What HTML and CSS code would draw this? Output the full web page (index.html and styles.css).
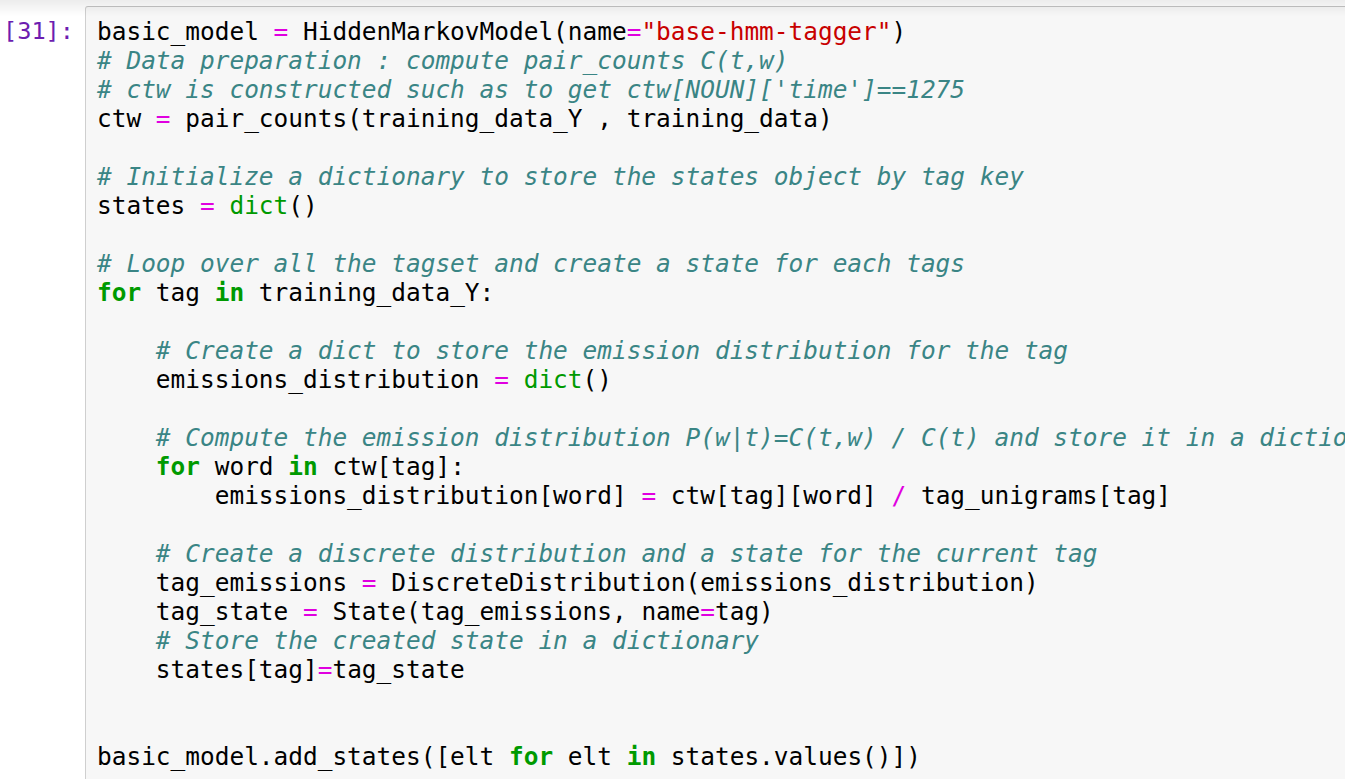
FILE: index.html
```html
<!DOCTYPE html>
<html>
<head>
<meta charset="utf-8">
<link rel="stylesheet" href="styles.css">
</head>
<body>
<div class="shade"></div>
<div class="cell">
  <div class="prompt">[31]:</div>
  <div class="editor">
<pre class="code">basic_model <span class="o">=</span> HiddenMarkovModel(name<span class="o">=</span><span class="s">"base-hmm-tagger"</span>)
<span class="c"># Data preparation : compute pair_counts C(t,w)</span>
<span class="c"># ctw is constructed such as to get ctw[NOUN]['time']==1275</span>
ctw <span class="o">=</span> pair_counts(training_data_Y , training_data)

<span class="c"># Initialize a dictionary to store the states object by tag key</span>
states <span class="o">=</span> <span class="b">dict</span>()

<span class="c"># Loop over all the tagset and create a state for each tags</span>
<span class="k">for</span> tag <span class="k">in</span> training_data_Y:

    <span class="c"># Create a dict to store the emission distribution for the tag</span>
    emissions_distribution <span class="o">=</span> <span class="b">dict</span>()

    <span class="c"># Compute the emission distribution P(w|t)=C(t,w) / C(t) and store it in a dictionary</span>
    <span class="k">for</span> word <span class="k">in</span> ctw[tag]:
        emissions_distribution[word] <span class="o">=</span> ctw[tag][word] <span class="o">/</span> tag_unigrams[tag]

    <span class="c"># Create a discrete distribution and a state for the current tag</span>
    tag_emissions <span class="o">=</span> DiscreteDistribution(emissions_distribution)
    tag_state <span class="o">=</span> State(tag_emissions, name<span class="o">=</span>tag)
    <span class="c"># Store the created state in a dictionary</span>
    states[tag]<span class="o">=</span>tag_state


basic_model.add_states([elt <span class="k">for</span> elt <span class="k">in</span> states.values()])
</pre>
  </div>
</div>
</body>
</html>
```

FILE: styles.css
```css
html, body {
  margin: 0;
  padding: 0;
  background: #ffffff;
  overflow: hidden;
  height: 779px;
}

.shade {
  position: fixed;
  top: 0;
  left: 0;
  right: 0;
  height: 16px;
  background: linear-gradient(to bottom, rgba(0,0,0,0.075), rgba(0,0,0,0));
  pointer-events: none;
  z-index: 2;
}

.cell {
  display: flex;
  align-items: flex-start;
  padding-top: 6px;
}

.prompt {
  flex: none;
  width: 74px;
  padding-right: 11px;
  text-align: right;
  font-family: "DejaVu Sans Mono", monospace;
  font-size: 23.6px;
  line-height: 29px;
  padding-top: 11px;
  color: #6d1db0;
}

.editor {
  flex: none;
  width: 1400px;
  height: 900px;
  background: #f7f7f7;
  border: 1px solid #cfcfcf;
  border-top-color: #c4c4c4;
  border-radius: 3px;
  box-sizing: border-box;
  padding: 10px 0 0 11px;
}

.code {
  margin: 0;
  font-family: "DejaVu Sans Mono", monospace;
  font-size: 24.45px;
  line-height: 29px;
  color: #000000;
  white-space: pre;
}

.o { color: #e000e0; }
.s { color: #c80000; }
.c { color: #3a8585; font-style: italic; }
.k { color: #009a00; font-weight: bold; }
.b { color: #009a00; }
```
